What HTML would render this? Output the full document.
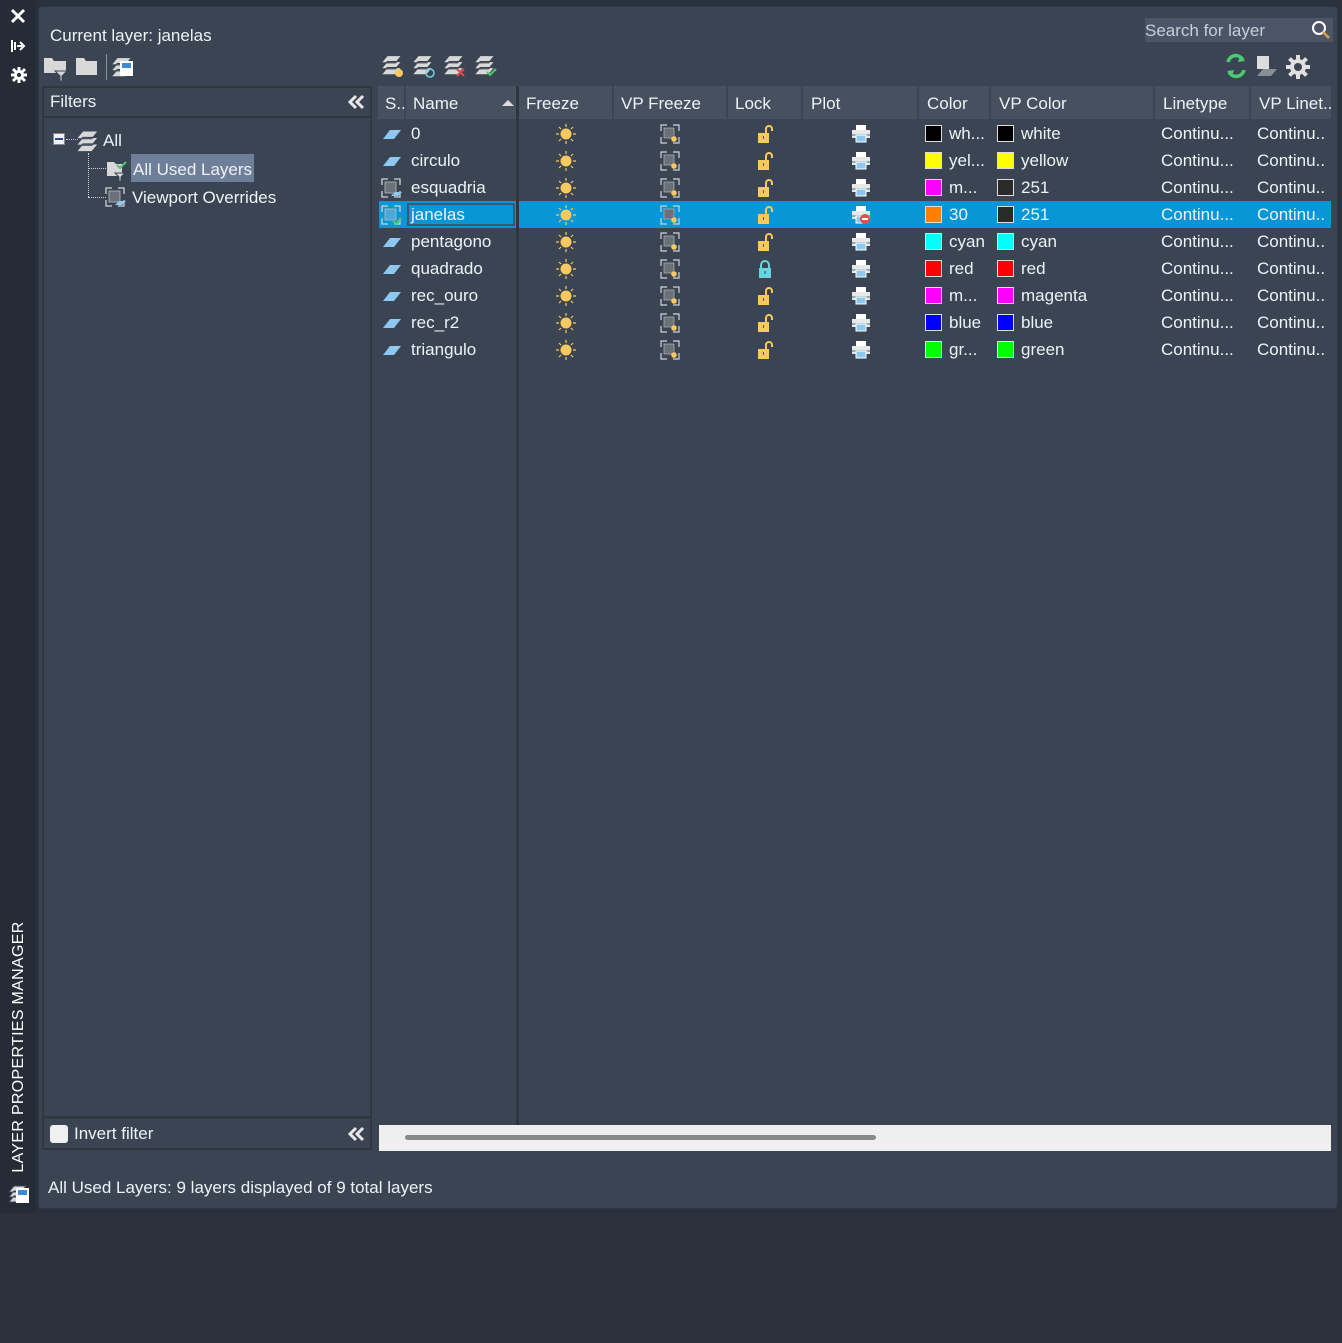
<!DOCTYPE html>
<html style="background:#2b313c"><head><meta charset="utf-8"><style>
*{margin:0;padding:0;box-sizing:border-box}
body{width:1342px;height:1213px;background:#2b313c;font-family:"Liberation Sans",sans-serif;color:#eef2f6;position:relative;overflow:hidden;font-size:17px}
.a{position:absolute}
.t{position:absolute;white-space:nowrap;line-height:20px}
svg{position:absolute;overflow:visible}
.sw{position:absolute;width:17px;height:17px;border:1px solid #ddd}
</style></head><body>
<svg width="0" height="0"><defs>
<g id="sun"><circle cx="0" cy="0" r="5.5" fill="#f8c95e"/><g stroke="#f8c95e" stroke-width="1.2"><path d="M0-10v3M0 7v3M-10 0h3M7 0h3M-7-7l2 2M5 5l2 2M-7 7l2-2M5-5l2-2"/></g></g>
<g id="vpf"><path d="M-9-3v-6h6M3-9h6v6M9 3v6h-6M-3 9h-6v-6" stroke="#cfd3d8" fill="none" stroke-width="1.2"/><rect x="-6" y="-6" width="10" height="10" fill="#6b717a" stroke="#aaa" stroke-width="0.8"/><circle cx="4" cy="5" r="2.8" fill="#f8c95e"/></g>
<g id="lock"><rect x="-7" y="-1" width="11" height="10" fill="#f8c95e"/><path d="M1-1v-4a3 3 0 0 1 6 0v2" stroke="#f8c95e" stroke-width="2" fill="none"/><rect x="-2" y="2" width="1" height="3" fill="#555"/></g>
<g id="lockc"><rect x="-6" y="-1" width="12" height="10" fill="#6ad3e0"/><path d="M-4-1v-3a4 4 0 0 1 8 0v3" stroke="#6ad3e0" stroke-width="2" fill="none"/><rect x="-0.5" y="2" width="1" height="3" fill="#337"/></g>
<g id="plot"><rect x="-5" y="-9" width="10" height="5" fill="#fff"/><rect x="-9" y="-4" width="18" height="8" fill="#e8e8e8"/><rect x="-9" y="0" width="18" height="2" fill="#9aa"/><rect x="-5" y="1" width="10" height="7" fill="#8cc8f0" stroke="#fff" stroke-width="1"/></g>
<g id="pl"><path d="M-9 5l7-9h11l-7 9z" fill="#8cc8f0"/></g>
<g id="vpi"><path d="M-9-3v-6h6M3-9h6v6M9 3v6h-6M-3 9h-6v-6" stroke="#cfd3d8" fill="none" stroke-width="1.3"/><rect x="-6" y="-6" width="11" height="11" fill="#6b717a" stroke="#bbb" stroke-width="0.8"/><path d="M0 8l4-4h7l-4 4z" fill="#8cc8f0"/></g>
<g id="lay"><path d="M-9 -1l5-6h12l-5 6z M-9 4l5-6h12l-5 6z M-9 9l5-6h12l-5 6z" fill="#d8d8d8" stroke="#3b4452" stroke-width="0.9"/></g>
<g id="chev"><path d="M8 0l-6 6 6 6M15 0l-6 6 6 6" stroke="#e8e8e8" stroke-width="3" fill="none"/></g>
</defs></svg>

<!-- left strip -->
<div class="a" style="left:0;top:0;width:36px;height:1213px;background:#262c36"></div>
<svg style="left:12px;top:10px"><path d="M0 0l12 12M12 0l-12 12" stroke="#fff" stroke-width="3"/></svg>
<svg style="left:11px;top:39px" width="16" height="14"><path d="M1 1v12M4 3v8M6 7h5M9 3l4 4-4 4" stroke="#fff" stroke-width="2" fill="none"/></svg>
<svg style="left:19px;top:75px"><circle r="5" fill="#fff"/><g stroke="#fff" stroke-width="3"><path d="M0-8v16M-8 0h16M-6-6l12 12M-6 6l12-12"/></g><circle r="2" fill="#262c36"/></svg>
<div class="t" style="left:19px;top:1047px;transform:translate(-50%,-50%) rotate(-90deg);font-size:16px;color:#fff;letter-spacing:0.3px">LAYER PROPERTIES MANAGER</div>
<svg style="left:18px;top:1193px"><use href="#lay"/><rect x="-2" y="-5" width="13" height="15" fill="#fff"/><rect x="0" y="-3" width="9" height="5" fill="#3a8cd8"/></svg>

<!-- main panel -->
<div class="a" style="left:38px;top:6px;width:1300px;height:1203px;background:#3b4452;border:1px solid #2f3641;border-radius:4px"></div>
<div class="t" style="left:50px;top:26px">Current layer: janelas</div>
<svg style="left:44px;top:56px"><path d="M0 2h8l2 3h12v12H0z" fill="#d8d8d8"/><path d="M11 15h12l-5 5v5h-2v-5z" fill="#d8d8d8" stroke="#3b4452"/></svg>
<svg style="left:76px;top:56px"><path d="M0 2h8l2 3h11v14H0z" fill="#d8d8d8"/></svg>
<div class="a" style="left:106px;top:54px;width:1px;height:26px;background:#8a9099"></div>
<svg style="left:122px;top:66px"><use href="#lay" transform="scale(1.2)"/><rect x="-2" y="-5" width="13" height="15" fill="#fff"/><rect x="0" y="-3" width="9" height="5" fill="#3a8cd8"/></svg>
<svg style="left:392px;top:64px"><use href="#lay" transform="scale(1.2)"/><circle cx="7" cy="9" r="4" fill="#f8c95e"/></svg>
<svg style="left:423px;top:64px"><use href="#lay" transform="scale(1.2)"/><circle cx="7" cy="9" r="4" fill="none" stroke="#6ad3e0" stroke-width="1.5"/></svg>
<svg style="left:454px;top:64px"><use href="#lay" transform="scale(1.2)"/><path d="M3 5l7 7M10 5l-7 7" stroke="#e04848" stroke-width="2"/></svg>
<svg style="left:485px;top:64px"><use href="#lay" transform="scale(1.2)"/><path d="M2 8l3 3 6-6" stroke="#4cc870" stroke-width="2" fill="none"/></svg>
<div class="a" style="left:1145px;top:18px;width:188px;height:24px;background:#4b5567"></div>
<div class="t" style="left:1145px;top:21px;color:#c9ced6">Search for layer</div>
<svg style="left:1311px;top:20px"><circle cx="8" cy="8" r="6" stroke="#fff" stroke-width="2" fill="none"/><path d="M12 12l6 6" stroke="#e0a050" stroke-width="2.5"/></svg>
<svg style="left:1224px;top:54px"><path d="M4 8a8 8 0 0 1 15-2M20 16a8 8 0 0 1-15 2" stroke="#4cc870" stroke-width="3.5" fill="none"/><path d="M16 2l5 5-7 1zM8 22l-5-5 7-1z" fill="#4cc870"/></svg>
<svg style="left:1256px;top:56px"><rect x="1" y="0" width="12" height="13" fill="#ddd"/><path d="M1 20l6-7h14l-6 7z" fill="#8a8f96"/></svg>
<svg style="left:1298px;top:67px"><circle r="8" fill="#e0e0e0"/><g stroke="#e0e0e0" stroke-width="4"><path d="M0-12v24M-12 0h24M-8.5-8.5l17 17M-8.5 8.5l17-17"/></g><circle r="4" fill="#3b4452"/></svg>

<!-- filters panel -->
<div class="a" style="left:42px;top:86px;width:330px;height:1032px;border:2px solid #30373f;background:#3b4452"></div>
<div class="a" style="left:42px;top:116px;width:330px;height:2px;background:#30373f"></div>
<div class="t" style="left:50px;top:92px">Filters</div>
<svg style="left:348px;top:96px"><use href="#chev"/></svg>
<div class="a" style="left:53px;top:133px;width:12px;height:12px;background:#f2f2f2;border:1px solid #888"></div>
<div class="a" style="left:55px;top:138px;width:8px;height:2px;background:#2a4a90"></div>
<div class="a" style="left:66px;top:139px;width:12px;border-top:1px dotted #ccc"></div>
<div class="a" style="left:88px;top:153px;height:44px;border-left:1px dotted #ccc"></div>
<div class="a" style="left:88px;top:168px;width:18px;border-top:1px dotted #ccc"></div>
<div class="a" style="left:88px;top:197px;width:18px;border-top:1px dotted #ccc"></div>
<svg style="left:88px;top:140px"><use href="#lay" transform="scale(1.3)"/></svg>
<div class="t" style="left:103px;top:131px">All</div>
<svg style="left:107px;top:160px"><path d="M0 2h7l2 2h6v12H0z" fill="#d8d8d8"/><path d="M8 13h10l-4 4v4h-2v-4z" fill="#d8d8d8" stroke="#3b4452"/><path d="M10 5l3 3 6-6" stroke="#4cc870" stroke-width="2" fill="none"/></svg>
<div class="a" style="left:131px;top:154px;width:123px;height:28px;background:#6f7f99"></div>
<div class="t" style="left:133px;top:160px">All Used Layers</div>
<svg style="left:115px;top:197px"><use href="#vpi"/></svg>
<div class="t" style="left:132px;top:188px">Viewport Overrides</div>
<div class="a" style="left:42px;top:1117px;width:330px;height:33px;border:2px solid #30373f"></div>
<div class="a" style="left:50px;top:1125px;width:18px;height:18px;background:#f0f0f0;border-radius:3px"></div>
<div class="t" style="left:74px;top:1124px">Invert filter</div>
<svg style="left:348px;top:1128px"><use href="#chev"/></svg>

<!-- grid header -->
<div class="a" style="left:378px;top:86px;width:953px;height:33px;background:#46505f"></div>
<div class="a" style="left:404px;top:86px;width:2px;height:33px;background:#3b4452"></div>
<div class="a" style="left:516px;top:86px;width:3px;height:1040px;background:#2e3540"></div>
<div class="a" style="left:612px;top:86px;width:2px;height:33px;background:#3b4452"></div>
<div class="a" style="left:726px;top:86px;width:2px;height:33px;background:#3b4452"></div>
<div class="a" style="left:801px;top:86px;width:2px;height:33px;background:#3b4452"></div>
<div class="a" style="left:917px;top:86px;width:2px;height:33px;background:#3b4452"></div>
<div class="a" style="left:989px;top:86px;width:2px;height:33px;background:#3b4452"></div>
<div class="a" style="left:1153px;top:86px;width:2px;height:33px;background:#3b4452"></div>
<div class="a" style="left:1249px;top:86px;width:2px;height:33px;background:#3b4452"></div>
<div class="t" style="left:385px;top:94px">S..</div>
<div class="t" style="left:413px;top:94px">Name</div>
<svg style="left:502px;top:99px"><path d="M0 7l6-6 6 6z" fill="#ddd"/></svg>
<div class="t" style="left:526px;top:94px">Freeze</div>
<div class="t" style="left:621px;top:94px">VP Freeze</div>
<div class="t" style="left:735px;top:94px">Lock</div>
<div class="t" style="left:811px;top:94px">Plot</div>
<div class="t" style="left:927px;top:94px">Color</div>
<div class="t" style="left:999px;top:94px">VP Color</div>
<div class="t" style="left:1163px;top:94px">Linetype</div>
<div class="t" style="left:1259px;top:94px">VP Linet..</div>

<div class="a" style="left:379px;top:201px;width:137px;height:27px;background:#0896d7"></div>
<div class="a" style="left:519px;top:201px;width:812px;height:27px;background:#0896d7"></div>
<div class="a" style="left:407px;top:203px;width:108px;height:23px;border:2px solid #3d5570"></div>

<svg style="left:392px;top:134px"><use href="#pl"/></svg>
<svg style="left:392px;top:161px"><use href="#pl"/></svg>
<svg style="left:391px;top:188px"><use href="#vpi"/></svg>
<svg style="left:391px;top:215px"><path d="M-9-3v-6h6M3-9h6v6M9 3v6h-6M-3 9h-6v-6" stroke="#cfd3d8" fill="none" stroke-width="1.3"/><rect x="-6" y="-6" width="11" height="11" fill="#4aa8dc" stroke="#bbb" stroke-width="0.8"/><path d="M2 6l3 3 5-6" stroke="#4cc870" stroke-width="2" fill="none"/></svg>
<svg style="left:392px;top:242px"><use href="#pl"/></svg>
<svg style="left:392px;top:269px"><use href="#pl"/></svg>
<svg style="left:392px;top:296px"><use href="#pl"/></svg>
<svg style="left:392px;top:323px"><use href="#pl"/></svg>
<svg style="left:392px;top:350px"><use href="#pl"/></svg>

<div class="t" style="left:411px;top:124px">0</div>
<div class="t" style="left:411px;top:151px">circulo</div>
<div class="t" style="left:411px;top:178px">esquadria</div>
<div class="t" style="left:411px;top:205px">janelas</div>
<div class="t" style="left:411px;top:232px">pentagono</div>
<div class="t" style="left:411px;top:259px">quadrado</div>
<div class="t" style="left:411px;top:286px">rec_ouro</div>
<div class="t" style="left:411px;top:313px">rec_r2</div>
<div class="t" style="left:411px;top:340px">triangulo</div>

<svg style="left:566px;top:134px"><use href="#sun"/></svg><svg style="left:670px;top:134px"><use href="#vpf"/></svg><svg style="left:765px;top:134px"><use href="#lock"/></svg><svg style="left:861px;top:134px"><use href="#plot"/></svg>
<svg style="left:566px;top:161px"><use href="#sun"/></svg><svg style="left:670px;top:161px"><use href="#vpf"/></svg><svg style="left:765px;top:161px"><use href="#lock"/></svg><svg style="left:861px;top:161px"><use href="#plot"/></svg>
<svg style="left:566px;top:188px"><use href="#sun"/></svg><svg style="left:670px;top:188px"><use href="#vpf"/></svg><svg style="left:765px;top:188px"><use href="#lock"/></svg><svg style="left:861px;top:188px"><use href="#plot"/></svg>
<svg style="left:566px;top:215px"><use href="#sun"/></svg><svg style="left:670px;top:215px"><use href="#vpf"/></svg><svg style="left:765px;top:215px"><use href="#lock"/></svg><svg style="left:861px;top:215px"><use href="#plot"/><circle cx="4" cy="4" r="5" fill="#e05050"/><rect x="1" y="3" width="6" height="2" fill="#fff"/></svg>
<svg style="left:566px;top:242px"><use href="#sun"/></svg><svg style="left:670px;top:242px"><use href="#vpf"/></svg><svg style="left:765px;top:242px"><use href="#lock"/></svg><svg style="left:861px;top:242px"><use href="#plot"/></svg>
<svg style="left:566px;top:269px"><use href="#sun"/></svg><svg style="left:670px;top:269px"><use href="#vpf"/></svg><svg style="left:765px;top:269px"><use href="#lockc"/></svg><svg style="left:861px;top:269px"><use href="#plot"/></svg>
<svg style="left:566px;top:296px"><use href="#sun"/></svg><svg style="left:670px;top:296px"><use href="#vpf"/></svg><svg style="left:765px;top:296px"><use href="#lock"/></svg><svg style="left:861px;top:296px"><use href="#plot"/></svg>
<svg style="left:566px;top:323px"><use href="#sun"/></svg><svg style="left:670px;top:323px"><use href="#vpf"/></svg><svg style="left:765px;top:323px"><use href="#lock"/></svg><svg style="left:861px;top:323px"><use href="#plot"/></svg>
<svg style="left:566px;top:350px"><use href="#sun"/></svg><svg style="left:670px;top:350px"><use href="#vpf"/></svg><svg style="left:765px;top:350px"><use href="#lock"/></svg><svg style="left:861px;top:350px"><use href="#plot"/></svg>

<div class="sw" style="left:925px;top:125px;background:#000"></div><div class="t" style="left:949px;top:124px">wh...</div><div class="sw" style="left:997px;top:125px;background:#000"></div><div class="t" style="left:1021px;top:124px">white</div>
<div class="sw" style="left:925px;top:152px;background:#ff0"></div><div class="t" style="left:949px;top:151px">yel...</div><div class="sw" style="left:997px;top:152px;background:#ff0"></div><div class="t" style="left:1021px;top:151px">yellow</div>
<div class="sw" style="left:925px;top:179px;background:#f0f"></div><div class="t" style="left:949px;top:178px">m...</div><div class="sw" style="left:997px;top:179px;background:#2a2a2a"></div><div class="t" style="left:1021px;top:178px">251</div>
<div class="sw" style="left:925px;top:206px;background:#ff8000"></div><div class="t" style="left:949px;top:205px">30</div><div class="sw" style="left:997px;top:206px;background:#2a2a2a"></div><div class="t" style="left:1021px;top:205px">251</div>
<div class="sw" style="left:925px;top:233px;background:#0ff"></div><div class="t" style="left:949px;top:232px">cyan</div><div class="sw" style="left:997px;top:233px;background:#0ff"></div><div class="t" style="left:1021px;top:232px">cyan</div>
<div class="sw" style="left:925px;top:260px;background:#f00"></div><div class="t" style="left:949px;top:259px">red</div><div class="sw" style="left:997px;top:260px;background:#f00"></div><div class="t" style="left:1021px;top:259px">red</div>
<div class="sw" style="left:925px;top:287px;background:#f0f"></div><div class="t" style="left:949px;top:286px">m...</div><div class="sw" style="left:997px;top:287px;background:#f0f"></div><div class="t" style="left:1021px;top:286px">magenta</div>
<div class="sw" style="left:925px;top:314px;background:#00f"></div><div class="t" style="left:949px;top:313px">blue</div><div class="sw" style="left:997px;top:314px;background:#00f"></div><div class="t" style="left:1021px;top:313px">blue</div>
<div class="sw" style="left:925px;top:341px;background:#0f0"></div><div class="t" style="left:949px;top:340px">gr...</div><div class="sw" style="left:997px;top:341px;background:#0f0"></div><div class="t" style="left:1021px;top:340px">green</div>

<div class="t" style="left:1161px;top:124px">Continu...</div><div class="t" style="left:1257px;top:124px">Continu..</div>
<div class="t" style="left:1161px;top:151px">Continu...</div><div class="t" style="left:1257px;top:151px">Continu..</div>
<div class="t" style="left:1161px;top:178px">Continu...</div><div class="t" style="left:1257px;top:178px">Continu..</div>
<div class="t" style="left:1161px;top:205px">Continu...</div><div class="t" style="left:1257px;top:205px">Continu..</div>
<div class="t" style="left:1161px;top:232px">Continu...</div><div class="t" style="left:1257px;top:232px">Continu..</div>
<div class="t" style="left:1161px;top:259px">Continu...</div><div class="t" style="left:1257px;top:259px">Continu..</div>
<div class="t" style="left:1161px;top:286px">Continu...</div><div class="t" style="left:1257px;top:286px">Continu..</div>
<div class="t" style="left:1161px;top:313px">Continu...</div><div class="t" style="left:1257px;top:313px">Continu..</div>
<div class="t" style="left:1161px;top:340px">Continu...</div><div class="t" style="left:1257px;top:340px">Continu..</div>

<div class="a" style="left:379px;top:1125px;width:952px;height:26px;background:#efefef"></div>
<div class="a" style="left:405px;top:1135px;width:471px;height:5px;background:#888;border-radius:3px"></div>

<div class="t" style="left:48px;top:1178px">All Used Layers: 9 layers displayed of 9 total layers</div>
</body></html>
